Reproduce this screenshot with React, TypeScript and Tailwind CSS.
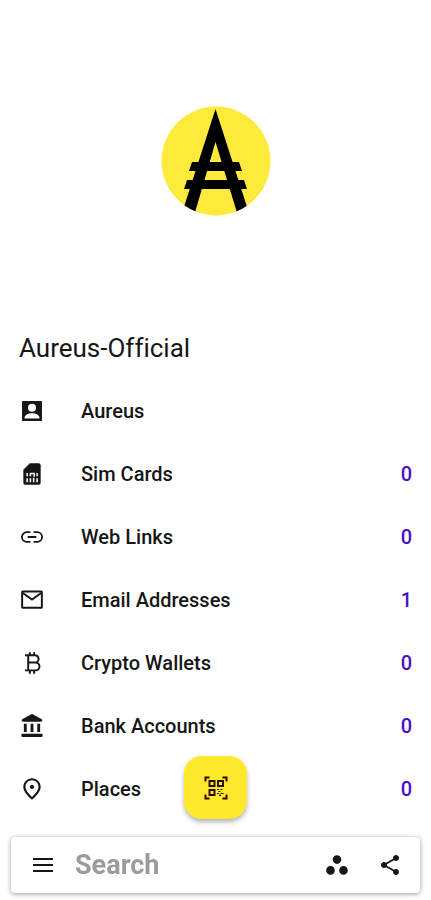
import type { ReactNode } from 'react'
import { MdOutlinePlace, MdShare, MdWorkspaces } from 'react-icons/md'

function Logo() {
  return (
    <svg viewBox="0 0 110 110" className="size-[110px]" role="img" aria-label="Aureus">
      <defs>
        <clipPath id="disc">
          <circle cx="55" cy="55" r="54.5" />
        </clipPath>
      </defs>
      <circle cx="55" cy="55" r="54.5" fill="#fdea3b" />
      <g clipPath="url(#disc)" fill="#000">
        <path d="M54.500 3 L88 107 L77 110 L54.500 36 L33 110 L21 107 Z" />
        <path d="M31 56 H78 L81 65 H28 Z" />
        <path d="M26 74 H83 L86 83 H23 Z" />
      </g>
    </svg>
  )
}

function AccountIcon() {
  return (
    <svg viewBox="0 0 24 24" className="size-[26px]">
      <path d="M2.800 2.800h18.400v18.400H2.800z" fill="currentColor" />
      <circle cx="12" cy="9" r="3.700" fill="#fff" />
      <path d="M5 19c0-3.500 3.500-5 7-5s7 1.500 7 5z" fill="#fff" />
    </svg>
  )
}

function SimIcon() {
  return (
    <svg viewBox="0 0 24 24" className="size-[26px]" fill="none">
      <path d="M10 2h8a2 2 0 0 1 2 2v16a2 2 0 0 1-2 2H6a2 2 0 0 1-2-2V8z" fill="currentColor" />
      <path
        d="M7.500 11v3M7.500 16v3.500M16.700 11v3M16.700 16v3.500M10.500 11v3M10.500 16v3.500M10.500 11.500h3.500v3M13.500 15.500v4"
        stroke="#fff"
        strokeWidth="1.400"
      />
    </svg>
  )
}

function LinkIcon() {
  return (
    <svg viewBox="0 0 24 24" className="size-[26px]" fill="none" stroke="currentColor" strokeWidth="1.700">
      <path d="M10.500 7.500H7.200a4.500 4.500 0 0 0 0 9h3.300M13.500 7.500h3.300a4.500 4.500 0 0 1 0 9h-3.300M8 12h8" />
    </svg>
  )
}

function MailIcon() {
  return (
    <svg viewBox="0 0 24 24" className="size-[26px]" fill="none" stroke="currentColor" strokeWidth="1.800">
      <rect x="2.900" y="4.200" width="18.200" height="15" rx="0.500" />
      <path d="M3.500 5.500 L12 11.500 L20.500 5.500" />
    </svg>
  )
}

function BitcoinIcon() {
  return (
    <svg viewBox="0 0 24 24" className="size-[26px]" fill="none" stroke="currentColor" strokeWidth="1.800">
      <path d="M5.500 4.800H14.700a3.400 3.400 0 0 1 0 6.800H8.500M14.700 11.600h.6a3.600 3.600 0 0 1 0 7.200H5.500M8.500 5v14M10 2v3M14 2v3M10 19v3M14 19v3" />
    </svg>
  )
}

function BankIcon() {
  return (
    <svg viewBox="0 0 24 24" className="size-[26px]" fill="currentColor">
      <path d="M11.300 1.200a1.500 1.500 0 0 1 1.400 0l8.300 4.600c1 .6.600 2.200-.6 2.200H3.600c-1.200 0-1.600-1.600-.6-2.200z" />
      <path d="M4.500 10h2.600v7.500H4.500zM10.700 10h2.600v7.500h-2.600zM16.900 10h2.600v7.500h-2.600z" />
      <rect x="2.200" y="19.200" width="19.600" height="3" rx="1.200" />
    </svg>
  )
}

function ScanIcon() {
  return (
    <svg viewBox="0 0 24 24" className="size-6" fill="none" stroke="currentColor" strokeWidth="2">
      <path d="M1.500 5.500V1.500h4M18.500 1.500h4v4M22.500 18.500v4h-4M5.500 22.500h-4v-4" />
      <path d="M5.500 5h5v5h-5zM14 5h5v5h-5zM5.500 14h5v5h-5z" />
      <path d="M13 13.500h2M16.500 13.500h2M14.500 15.500h2M13 17.500h2M16.500 17.500h3M15 19.300h2" strokeWidth="1.200" />
    </svg>
  )
}

function MenuIcon() {
  return (
    <svg viewBox="0 0 26 26" className="size-[26px]" fill="currentColor">
      <path d="M3 6h20v2H3zM3 12h20v2H3zM3 18h20v2H3z" />
    </svg>
  )
}

const items: { label: string; icon: ReactNode; count?: number }[] = [
  { label: 'Aureus', icon: <AccountIcon /> },
  { label: 'Sim Cards', icon: <SimIcon />, count: 0 },
  { label: 'Web Links', icon: <LinkIcon />, count: 0 },
  { label: 'Email Addresses', icon: <MailIcon />, count: 1 },
  { label: 'Crypto Wallets', icon: <BitcoinIcon />, count: 0 },
  { label: 'Bank Accounts', icon: <BankIcon />, count: 0 },
  { label: 'Places', icon: <MdOutlinePlace className="size-[26px]" />, count: 0 },
]

export default function App() {
  return (
    <div className="min-h-screen bg-white pb-20 font-[Roboto,sans-serif] text-[#161616]">
      <header className="flex justify-center pt-[106px] pb-[114px]">
        <Logo />
      </header>

      <main>
        <h1 className="px-[19px] text-[26px] leading-9 [font-variant-ligatures:none]">Aureus-Official</h1>

        <ul className="mt-[13px]">
          {items.map((item) => (
            <li key={item.label}>
              <button className="flex h-[63px] w-full items-center px-[19px] text-left text-xl font-medium">
                {item.icon}
                <span className="ml-9 flex-1">{item.label}</span>
                {item.count !== undefined && <span className="text-[#4a0fc4]">{item.count}</span>}
              </button>
            </li>
          ))}
        </ul>
      </main>

      <div className="fixed inset-x-0 bottom-0 flex flex-col items-center gap-[18px] px-[11px] pb-[7px]">
        <button
          aria-label="Scan code"
          className="flex size-[63px] items-center justify-center rounded-[18px] bg-[#fee92c] text-[#2b1010] shadow-[0_3px_5px_rgba(0,0,0,0.3)]"
        >
          <ScanIcon />
        </button>

        <div className="flex h-14 w-full items-center rounded bg-white pr-[18px] pl-[19px] shadow-[0_1px_5px_rgba(0,0,0,0.4)]">
          <button aria-label="Menu">
            <MenuIcon />
          </button>
          <input
            type="search"
            aria-label="Search"
            placeholder="Search"
            className="ml-[19px] min-w-0 flex-1 text-[27px] font-bold outline-none placeholder:text-[#9b9b9b]"
          />
          <button aria-label="Workspaces">
            <MdWorkspaces className="size-[26px]" />
          </button>
          <button aria-label="Share" className="ml-7">
            <MdShare className="size-6" />
          </button>
        </div>
      </div>
    </div>
  )
}
